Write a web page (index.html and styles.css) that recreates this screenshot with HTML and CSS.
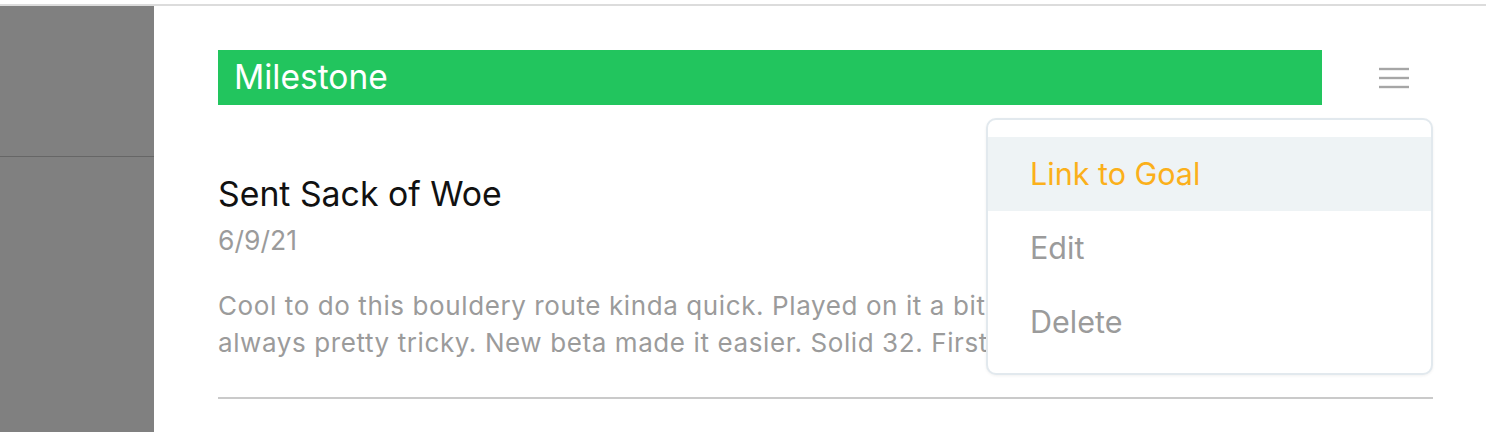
FILE: index.html
```html
<!DOCTYPE html>
<html>
<head>
<meta charset="utf-8">
<link rel="stylesheet" href="styles.css">
</head>
<body>
<div class="page">
  <aside class="sidebar">
    <div class="sidebar-top"></div>
  </aside>
  <main class="main">
    <div class="card-head">
      <div class="tag">Milestone</div>
      <button class="menu-btn" aria-label="menu">
        <svg width="32" height="22" viewBox="0 0 32 22"><g stroke="#a6a6a6" stroke-width="2.4" stroke-linecap="butt"><line x1="1" y1="2" x2="31" y2="2"/><line x1="1" y1="11" x2="31" y2="11"/><line x1="1" y1="20" x2="31" y2="20"/></g></svg>
      </button>
      <ul class="dropdown">
        <li class="item active">Link to Goal</li>
        <li class="item">Edit</li>
        <li class="item">Delete</li>
      </ul>
    </div>
    <h2 class="title">Sent Sack of Woe</h2>
    <div class="date">6/9/21</div>
    <p class="body">Cool to do this bouldery route kinda quick. Played on it a bit before this season and it was always pretty tricky. New beta made it easier. Solid 32. First time clean.</p>
    <hr class="divider">
  </main>
</div>
</body>
</html>
```
FILE: styles.css
```css
* { box-sizing: border-box; }
html, body { margin: 0; padding: 0; background: #fff; }
body {
  font-family: Inter, "Noto Sans", "Liberation Sans", sans-serif;
  height: 432px;
  overflow: hidden;
  padding-top: 4px;
}
.page {
  display: flex;
  border-top: 2px solid #dcdcdc;
  height: 428px;
}
.sidebar {
  width: 154px;
  flex: none;
  background: #808080;
}
.sidebar-top {
  height: 151px;
  border-bottom: 1px solid #666;
}
.main {
  flex: 1;
  padding: 44px 53px 0 64px;
}
.card-head {
  position: relative;
  display: flex;
  align-items: center;
  justify-content: space-between;
}
.tag {
  width: 1104px;
  height: 55px;
  background: #22c55e;
  color: #fff;
  font-size: 33.5px;
  line-height: 55px;
  padding-left: 16px;
}
.menu-btn {
  border: 0;
  background: none;
  padding: 0;
  margin-right: 23px;
  display: flex;
}
.dropdown {
  position: absolute;
  right: 0;
  top: 68px;
  width: 447px;
  margin: 0;
  padding: 17px 0 14px;
  list-style: none;
  background: #fff;
  border: 2px solid #e2e9ee;
  border-radius: 10px;
  box-shadow: 0 1px 3px rgba(0,0,0,0.06);
  z-index: 2;
}
.item {
  height: 74px;
  line-height: 74px;
  padding-left: 42px;
  font-size: 30.5px;
  color: #9b9b9b;
}
.item.active {
  background: #eef3f5;
  color: #fbb01b;
}
.title {
  margin: 66px 0 0;
  font-size: 33.8px;
  font-weight: 400;
  color: #111;
  line-height: 46px;
}
.date {
  margin-top: 8px;
  font-size: 26.5px;
  color: #9b9b9b;
  line-height: 30px;
}
.body {
  margin: 32px 0 0;
  font-size: 26px;
  letter-spacing: 0.6px;
  line-height: 37px;
  color: #9b9b9b;
}
.divider {
  margin: 36px 0 0;
  border: 0;
  height: 2px;
  background: #cacaca;
}
```
